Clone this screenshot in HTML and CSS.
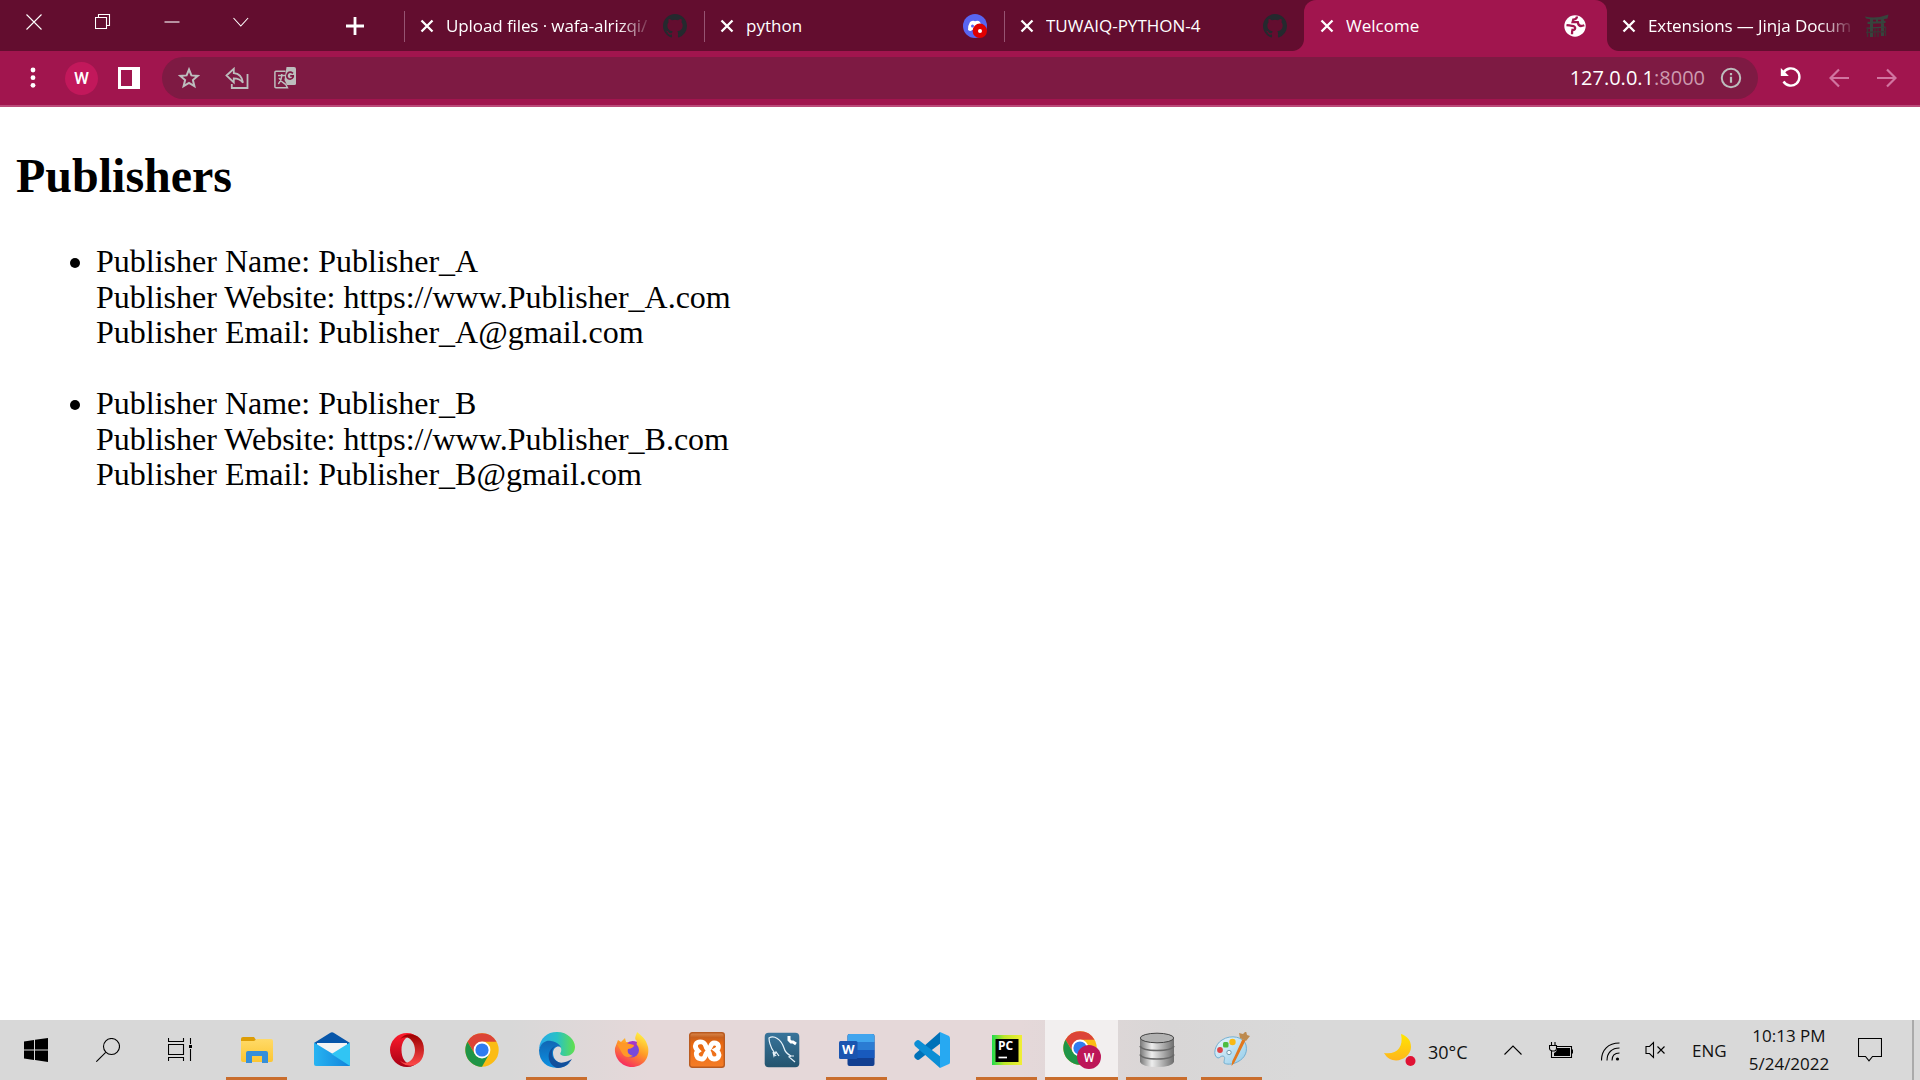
FILE: index.html
```html
<!DOCTYPE html>
<html lang="en">
<head>
<meta charset="utf-8">
<title>Welcome</title>
<link rel="stylesheet" href="styles.css">
</head>
<body>
<svg width="0" height="0" class="defs">
  <defs>
    <symbol id="close" viewBox="0 0 14 14"><path d="M1.5 1.5l11 11M12.500 1.500l-11 11" stroke="#fff" stroke-width="2.300" fill="none"/></symbol>
    <symbol id="github" viewBox="0 0 16 16"><path fill="#24292e" d="M8 0C3.580 0 0 3.580 0 8c0 3.540 2.290 6.530 5.470 7.590.4.070.55-.17.55-.38 0-.19-.01-.82-.01-1.490-2.010.37-2.530-.49-2.690-.94-.09-.23-.48-.94-.82-1.130-.28-.15-.68-.52-.01-.53.63-.01 1.080.58 1.230.82.72 1.210 1.870.87 2.330.66.070-.52.28-.87.51-1.070-1.780-.2-3.640-.89-3.640-3.950 0-.87.31-1.590.82-2.150-.08-.2-.36-1.020.08-2.120 0 0 .67-.21 2.200.82a7.600 7.600 0 0 1 4 0c1.530-1.040 2.200-.82 2.200-.82.44 1.100.16 1.920.08 2.120.51.56.82 1.270.82 2.150 0 3.070-1.870 3.750-3.650 3.950.29.25.54.73.54 1.480 0 1.070-.01 1.930-.01 2.200 0 .21.15.46.55.38A8 8 0 0 0 16 8c0-4.420-3.580-8-8-8z"/></symbol>
    <symbol id="chrome" viewBox="0 0 34 34">
      <circle cx="17" cy="17" r="16.700" fill="#fbbc14"/>
      <path d="M2.500 8.700A16.700 16.700 0 0 1 31.500 8.700H17L10 21z" fill="#dc4437"/>
      <path d="M2.500 8.700A16.700 16.700 0 0 0 17 33.700L24.200 21 9.800 21z" fill="#1f9547"/>
      <circle cx="17" cy="17" r="8.400" fill="#fff"/><circle cx="17" cy="17" r="6.600" fill="#2f7cf0"/>
    </symbol>
    <linearGradient id="operaA" x2="0" y2="1"><stop stop-color="#ff1b2d"/><stop offset="1" stop-color="#a70014"/></linearGradient>
    <linearGradient id="operaB" x2="0" y2="1"><stop stop-color="#9c0000"/><stop offset="1" stop-color="#ff4b4b"/></linearGradient>
    <linearGradient id="edgeA"><stop stop-color="#28a8ea"/><stop offset=".5" stop-color="#27c1c6"/><stop offset="1" stop-color="#62e04b"/></linearGradient>
    <linearGradient id="edgeB" x2="0" y2="1"><stop stop-color="#1266b4"/><stop offset="1" stop-color="#0b91e2"/></linearGradient>
    <linearGradient id="fox" x1=".7" x2=".2" y2="1"><stop stop-color="#fff044"/><stop offset=".45" stop-color="#ff9a26"/><stop offset="1" stop-color="#f51b68"/></linearGradient>
    <linearGradient id="mailA"><stop stop-color="#27b4f2"/><stop offset="1" stop-color="#1283da"/></linearGradient>
    <linearGradient id="folder" x2="0" y2="1"><stop stop-color="#ffda68"/><stop offset="1" stop-color="#fcc632"/></linearGradient>
    <linearGradient id="sql" x2="0" y2="1"><stop stop-color="#38749b"/><stop offset="1" stop-color="#24546e"/></linearGradient>
    <linearGradient id="pc"><stop stop-color="#1fdb4c"/><stop offset=".4" stop-color="#bce629"/><stop offset="1" stop-color="#f2ee35"/></linearGradient>
    <linearGradient id="disk"><stop stop-color="#777"/><stop offset=".35" stop-color="#eee"/><stop offset="1" stop-color="#6d6d6d"/></linearGradient>
    <linearGradient id="moon" x2="0" y2="1"><stop stop-color="#ffe600"/><stop offset="1" stop-color="#ffb51c"/></linearGradient>
    <linearGradient id="xampp" x2="0" y2="1"><stop stop-color="#d98a50"/><stop offset=".14" stop-color="#c8601e"/><stop offset=".3" stop-color="#e8670f"/><stop offset="1" stop-color="#f57d27"/></linearGradient>
    <linearGradient id="palette" x2="1" y2="1"><stop stop-color="#edf8fd"/><stop offset="1" stop-color="#91cbe9"/></linearGradient>
  </defs>
</svg>

<header class="tabstrip">
  <div class="window-controls">
    <svg width="16" height="16" viewBox="0 0 16 16"><path d="M.5 .5l15 15M15.500 .5l-15 15" class="thin-white"/></svg>
    <svg width="16" height="16" viewBox="0 0 16 16"><path d="M.5 3.500h11v11H.5zM3.500 3.500v-3h11v11h-3" class="thin-white"/></svg>
    <svg width="16" height="16" viewBox="0 0 16 16"><path d="M.5 8h15" class="thin-white"/></svg>
    <svg width="16" height="16" viewBox="0 0 16 16"><path d="M.5 4l7.300 8 7.300-8" class="thin-white"/></svg>
    <svg class="new-tab" width="18" height="18" viewBox="0 0 18 18"><path d="M9 0v18M0 9h18" stroke="#fff" stroke-width="2.800"/></svg>
  </div>
  <div class="tab">
    <svg class="close" width="14" height="14"><use href="#close"/></svg>
    <span class="title faded">Upload files · wafa-alrizqi/</span>
    <svg width="24" height="24"><use href="#github"/></svg>
  </div>
  <div class="tab">
    <svg class="close" width="14" height="14"><use href="#close"/></svg>
    <span class="title python">python</span>
    <svg width="24" height="24" viewBox="0 0 24 24"><circle cx="12" cy="12" r="12" fill="#5865f2"/><path d="M7 8q3-2 5-.8 3-1.200 5 .8 2 3 2 8-3 2-4 0H9q-1 2-4 0 0-5 2-8z" fill="#fff"/><circle cx="9.500" cy="12" r="1.500" fill="#5865f2"/><circle cx="16.800" cy="16.800" r="7.200" fill="#e00000"/><circle cx="17" cy="17" r="2" fill="#fff"/></svg>
  </div>
  <div class="tab">
    <svg class="close" width="14" height="14"><use href="#close"/></svg>
    <span class="title tuwaiq">TUWAIQ-PYTHON-4</span>
    <svg width="24" height="24"><use href="#github"/></svg>
  </div>
  <div class="tab active">
    <svg class="close" width="14" height="14"><use href="#close"/></svg>
    <span class="title welcome">Welcome</span>
    <svg width="24" height="24" viewBox="0 0 24 24"><circle cx="12" cy="12" r="10.700" fill="#fff"/><path d="M3.500 11.200q3 .4 5.500.6 3 .2 3.200 2.200-.1 2-2.700 1.800-.5 1.200-.5 4.500M14 2.500q-.3 3-3.700 3.200l-.7 2.500h5.200q.7 3.800 3.200 3.800 1.500 0 3.300-.7" stroke="#a1154e" stroke-width="2.300" fill="none"/></svg>
  </div>
  <div class="tab last">
    <svg class="close" width="14" height="14"><use href="#close"/></svg>
    <span class="title faded jinja">Extensions — Jinja Docum</span>
    <svg width="24" height="24" viewBox="0 0 24 24"><path d="M0 2.500q12 2.500 23.500-2l-1 4Q12 7 1 4.500zM2.500 7.800l18-1v2.300l-18 .8zM5 5h3v18H5zM16 5h3v17h-3zM11 5h2v4h-2zM1.500 13.500l19-1v1.300l-19 1z" fill="#37443d"/><path d="M2.500 14v9M10 14v9M13 14v9M20.500 13v9M1 18.500l20-1" stroke="#3c3335" stroke-width="1.300"/></svg>
  </div>
</header>

<nav class="toolbar">
  <svg class="menu" width="6" height="22" viewBox="0 0 6 22"><g fill="#fff"><circle cx="3" cy="3" r="2.400"/><circle cx="3" cy="10.700" r="2.400"/><circle cx="3" cy="18.300" r="2.400"/></g></svg>
  <span class="avatar">W</span>
  <svg class="panel" width="22" height="22" viewBox="0 0 22 22"><path d="M0 0h22v22H0zM3 3v16h11V3z" fill="#fff" fill-rule="evenodd"/></svg>
  <div class="omnibox">
    <svg width="22" height="22" viewBox="0 0 22 22"><path d="M11 2.500l2.400 5.900 6.300.5-4.800 4.100 1.500 6.200L11 15.900l-5.400 3.300 1.500-6.200L2.300 8.900l6.300-.5z" fill="none" stroke="#bdbdbd" stroke-width="2"/></svg>
    <svg width="24" height="22" viewBox="0 0 24 22"><path d="M1.500 8.500L8.800 1.800v4.400c5 .3 8.200 3.300 9.200 9.500-2.300-3.200-5.200-4.300-9.200-4.300v4zM6.800 17v4h15.700V7" fill="none" stroke="#bdbdbd" stroke-width="1.800"/></svg>
    <svg width="22" height="22" viewBox="0 0 22 22"><path d="M11.500 4.200H1.900q-1 0-1 1v14.500q0 1 1 1h11.500l-2-4M4 8.500h8M7.800 7v2q-.5 5-3.500 8M5 11q2 3.500 6 6" fill="none" stroke="#bdbdbd" stroke-width="1.500"/><path d="M12.500 0H20q2 0 2 2v14.500q0 1.500-1.500 1.500H13l-2.500-5z" fill="#bdbdbd"/><path d="M19 6.300q-3-2.300-5.300 0-2 3.500.8 5.500 3 1.300 4.700-2v-1h-3" fill="none" stroke="#7e1a43" stroke-width="1.700"/></svg>
    <span class="url">127.0.0.1<span class="port">:8000</span></span>
    <svg class="info" width="22" height="22" viewBox="0 0 22 22"><circle cx="11" cy="11" r="9.200" fill="none" stroke="#bdbdbd" stroke-width="2"/><path d="M11 9.800v6M11 6v2.200" stroke="#bdbdbd" stroke-width="2.200"/></svg>
  </div>
  <svg class="reload" width="22" height="22" viewBox="0 0 22 22"><path d="M3.500 5.500A8.600 8.600 0 1 1 3.500 14.500" fill="none" stroke="#fff" stroke-width="2.400"/><path d="M.8 1v8h8z" fill="#fff"/></svg>
  <svg class="nav-arrow" width="20" height="20" viewBox="0 0 20 20"><path d="M20 10H1.500M10 1.500L1.500 10l8.500 8.500" class="arrow"/></svg>
  <svg class="nav-arrow" width="20" height="20" viewBox="0 0 20 20"><path d="M0 10h18.500M10 1.500l8.500 8.500-8.500 8.500" class="arrow"/></svg>
</nav>

<main class="page">
  <h2>Publishers</h2>
  <ul>
    <li>Publisher Name: Publisher_A<br>Publisher Website: https://www.Publisher_A.com<br>Publisher Email: Publisher_A@gmail.com</li>
    <li>Publisher Name: Publisher_B<br>Publisher Website: https://www.Publisher_B.com<br>Publisher Email: Publisher_B@gmail.com</li>
  </ul>
</main>

<footer class="taskbar">
  <div class="system">
    <svg width="24" height="24" viewBox="0 0 24 24"><path d="M0 3.400l10-1.400v9.400H0zM11 1.800L24 0v11.400H11zM0 12.400h10v9.500L0 20.500zM11 12.400h13V24l-13-1.900z"/></svg>
    <svg width="24" height="24" viewBox="0 0 24 24"><circle cx="15.500" cy="8.500" r="8" class="line"/><path d="M9.700 14.300L.3 23.700" class="line"/></svg>
    <svg width="24" height="24" viewBox="0 0 24 24"><path d="M.5 0v3.500h15V0M.5 6.500h15v10H.5zM.5 23v-3.500h15V23M22.500 0v6M22.500 11v12" class="line"/><path d="M21 7h3v3h-3z"/></svg>
  </div>
  <div class="apps">
    <div class="app open"><svg width="36" height="36" viewBox="0 0 36 36"><path d="M2 7q0-2 2-2h11l2 3v4H2z" fill="#dd9d06"/><path d="M2 9h13l3-2h14q2 0 2 2v19q0 2-2 2H4q-2 0-2-2z" fill="url(#folder)"/><path d="M7 21q0-2 2-2h18q2 0 2 2v10h-6v-7H13v7H7z" fill="#368fd9"/></svg></div>
    <div class="app"><svg width="36" height="36" viewBox="0 0 36 36"><path d="M0 11L16 1q2-1.300 4 0l16 10v10H0z" fill="#0756aa"/><path d="M3 11h30v14H3z" fill="#f4f4f4"/><path d="M0 10.500l36 22v1.500H2q-2 0-2-2z" fill="url(#mailA)"/><path d="M36 10.500L17.500 22 36 34z" fill="#31c5f4"/></svg></div>
    <div class="app"><svg width="36" height="36" viewBox="0 0 36 36"><path d="M18 1a17 17 0 1 0 0 34c5 0 9-2 11.500-5.500-10 7-17-1-17-11.500S20 0 29.500 6.500C27 3 23 1 18 1z" fill="url(#operaA)"/><path d="M11 7.500C18 1 26 9 26 18s-8 17-15 10.500C16 37 35 36 35 18S16-1 11 7.500z" fill="url(#operaB)"/></svg></div>
    <div class="app"><svg width="34" height="34"><use href="#chrome"/></svg></div>
    <div class="app open"><svg width="36" height="36" viewBox="0 0 36 36"><path d="M0 17C1 6 8 0 18 0c11 0 18 8 18 15 0 6-5 9-9 9-5 0-7-2-5-4 3-9-14-14-22-3z" fill="url(#edgeA)"/><path d="M0 18C2 10 8 8 12 9c7 1 10 5 10 7-2-3-8-1-8 5 0 8 8 13 17 10C21 40 0 37 0 18z" fill="url(#edgeB)"/><path d="M16 14c-5 4-4 13 3 16 5 2 10-1 14-3-3 5-8 9-14 9-9-1-14-16-3-22z" fill="#114f9c"/></svg></div>
    <div class="app"><svg width="36" height="36" viewBox="0 0 36 36"><path d="M4 8l3 2 4-4 1 4c4 0 6 2 6 4l5-5c-4-2 0-7 0-9 5 4 9 7 11 15 2 11-5 20-16 20C7 35 0 25 1 16z" fill="url(#fox)"/><circle cx="17.500" cy="18" r="7.500" fill="#7749dc"/><path d="M12 12q5-5 11-2l-1 5q-4 0-6 2z" fill="#a437c7"/><path d="M3 12l9-1 8 2q0 3-6 4-2 5 5 7-8 3-11-3z" fill="#ff9828"/></svg></div>
    <div class="app"><svg width="36" height="36" viewBox="0 0 36 36"><rect x=".7" y=".7" width="34.600" height="34.600" rx="2.500" fill="url(#xampp)" stroke="#b95b20" stroke-width="1.400"/><path d="M9 19c-5-5-2-10 4-9 5 1 3 7 6 7s2-6 6-6c5 0 6 5 2 7 5 4 3 9-2 9-6 0-3-7-6-7s-2 7-6 7c-6 0-7-6-4-8z" fill="none" stroke="#fff" stroke-width="4.800"/></svg></div>
    <div class="app"><svg width="36" height="36" viewBox="0 0 36 36"><rect x=".7" y=".7" width="34.600" height="34.600" rx="4" fill="url(#sql)"/><path d="M12 24l-2-4c-4-5-5-12-5-14 5-3 12 1 15 10 1 4 3 6 7 8l-2 1 6 5M9 20l1 4 2-4 3 4M27 24l3 0" fill="none" stroke="#e8f3fa" stroke-width="1.200"/><path d="M25 4v4l2 2h2l3 2" fill="none" stroke="#fff" stroke-width="3"/></svg></div>
    <div class="app open"><svg width="36" height="36" viewBox="0 0 36 36"><rect x="8.500" y="2" width="27" height="32" rx="2" fill="#123f91"/><path d="M8.500 18h27v8h-27z" fill="#185abd"/><path d="M8.500 10h27v8h-27z" fill="#2b7cd3"/><path d="M8.500 10V4q0-2 2-2h23q2 0 2 2v6z" fill="#41a5ee"/><rect y="9" width="18.500" height="18" rx="1.500" fill="#1a55b0"/><text x="9.200" y="22" text-anchor="middle" class="word">W</text></svg></div>
    <div class="app"><svg width="36" height="36" viewBox="0 0 36 36"><path d="M26 0L1 22q-2 3 1 5 2 2 4 0L27 11z" fill="#0071b8"/><path d="M26 36L1 14q-2-3 1-5 2-2 4 0l21 16z" fill="#0c8ed5"/><path d="M26 0l9 4q1 1 1 3v23q0 2-1 2l-9 4z" fill="#27a9f2"/></svg></div>
    <div class="app open"><svg width="30" height="30" viewBox="0 0 30 30"><path d="M0 0h30v30H0z" fill="url(#pc)"/><path d="M3.500 4h23v23h-23z"/><text x="6" y="15" class="pc">PC</text><path d="M6.500 22.500h8.500" stroke="#fff" stroke-width="1.700"/></svg></div>
    <div class="app open current"><svg width="38" height="38" viewBox="0 0 38 38"><use href="#chrome" width="34" height="34"/><circle cx="26" cy="26" r="12" fill="#bd1758"/><text x="26" y="30.500" text-anchor="middle" class="badge">W</text></svg></div>
    <div class="app open"><svg width="36" height="36" viewBox="0 0 36 36"><path d="M1 6v24q2 5 17 5t17-5V6z" fill="url(#disk)"/><path d="M1 14q2 4.500 17 4.500T35 14M1 22.500q2 4.500 17 4.500t17-4.500" fill="none" stroke="#696969" stroke-width="1.700"/><ellipse cx="18" cy="6" rx="16.700" ry="4.800" fill="#b2b2b2" stroke="#444" stroke-width="1"/></svg></div>
    <div class="app open"><svg width="36" height="36" viewBox="0 0 36 36"><path d="M4 26C-2 24 1 12 8 8c9-6 22-3 24 5 2 9-3 15-11 18-5 2-10 1-11 0 0-4 2-6-1-7-3 0-3 2-5 2z" fill="url(#palette)" stroke="#72afd1"/><circle cx="6" cy="18" r="2.900" fill="#df4445"/><rect x="9" y="10" width="5.500" height="5.500" rx="1.500" fill="#4cbd42"/><circle cx="18.500" cy="10" r="3.200" fill="#f8b914"/><circle cx="15" cy="20.500" r="2.200" fill="#eff7fb" stroke="#739caf"/><path d="M17.500 34q0-5 3-9.500l8-17.500 3 1.500-9 18q-2 5-5 7.500z" fill="#e2781e"/><path d="M26 6l-1-5 4 1 3-3 1 4 3 1-4 5z" fill="#bd8b50"/></svg></div>
  </div>
  <div class="tray">
    <svg class="weather" width="32" height="33" viewBox="0 0 32 33"><path d="M17 0c6 2 10 6 10 13 0 12-19 20-27 6 12 2 20-5 17-19z" fill="url(#moon)"/><circle cx="26.500" cy="27" r="5" fill="#e01234"/></svg>
    <span class="temperature">30°C</span>
    <svg class="chevron" width="18" height="10" viewBox="0 0 18 10"><path d="M.5 9.500L9 1l8.500 8.500" class="line"/></svg>
    <svg class="battery" width="24" height="17" viewBox="0 0 24 17"><path d="M8 4.500h14.500v11h-20v-7M23.500 7.500v4" class="line"/><path d="M8 6h13v8H5v-3q3-1 3-5z"/><path d="M2.500 0v3M6 0v3M.5 3.500h7v3q0 2-2 2.500H3Q.5 8.500.5 6.500z" class="line"/></svg>
    <svg class="wifi" width="19" height="19" viewBox="0 0 19 19"><path d="M.5 18.500C.5 8 7 1 18.500 1M6 18.500C6 10.500 11 6 18.500 6M11 18.500Q11 11 18.500 11" class="line"/><circle cx="16.500" cy="17" r="1.600"/></svg>
    <svg class="sound" width="22" height="18" viewBox="0 0 22 18"><path d="M1 5.500h3.500l4-4v15l-4-4H1zM12.500 5.500l7 7M19.500 5.500l-7 7" class="line"/></svg>
    <span class="language">ENG</span>
    <div class="clock"><span class="time">10:13 PM</span><span class="date">5/24/2022</span></div>
    <svg class="action-center" width="24" height="24" viewBox="0 0 24 24"><path d="M.5 .5h23v18h-9l-3.500 4.300-3.500-4.300h-7z" class="line"/></svg>
    <span class="peek"></span>
  </div>
</footer>
</body>
</html>
```
FILE: styles.css
```css
* { box-sizing: border-box; }
body { margin: 0; height: 1080px; overflow: hidden; display: flex; flex-direction: column; background: #fff; font-family: "Open Sans", "Noto Sans", sans-serif; }
svg { display: block; flex: none; }
.defs { position: absolute; }
.thin-white { fill: none; stroke: #fff; stroke-width: 1.1; }
.line { fill: none; stroke: #000; stroke-width: 1.1; }
.arrow { fill: none; stroke: #d175a0; stroke-width: 2.2; }

.tabstrip { display: flex; height: 51px; flex: none; background: #630d2f; }
.window-controls { display: flex; width: 404px; flex: none; gap: 53px; padding: 14px 0 0 26px; }
.new-tab { margin: 3px 0 0 44px; }
.tab { position: relative; display: flex; align-items: center; width: 300px; flex: none; padding: 1px 17px 0 16px; color: #fff; font-size: 17px; }
.tab::before { content: ""; position: absolute; left: 0; top: 11px; width: 1px; height: 31px; background: #965472; }
.tab .close { margin-right: 12px; }
.title { width: 205px; margin-right: 12px; overflow: hidden; white-space: nowrap; line-height: 26px; }
.faded { letter-spacing: -.1px; -webkit-mask-image: linear-gradient(to right, #000 84%, transparent 101%); mask-image: linear-gradient(to right, #000 84%, transparent 101%); }
.active { width: 303px; background: #a1154e; border-radius: 12px 12px 0 0; padding-right: 18px; }
.active::before, .active::after { content: ""; position: absolute; left: -12px; top: 39px; width: 12px; height: 12px; background: radial-gradient(circle at 0 0, #630d2f 11.5px, #a1154e 12.5px); }
.active::after { left: auto; right: -12px; background: radial-gradient(circle at 100% 0, #630d2f 11.5px, #a1154e 12.5px); }
.last { padding-left: 15px; }
.last::before { display: none; }

.toolbar { display: flex; align-items: center; height: 56px; flex: none; padding-left: 30px; background: #a1154e; border-bottom: 2px solid #bb4b79; }
.avatar { width: 33px; height: 33px; margin: 0 20px 0 29px; border-radius: 50%; background: #c2185b; color: #fff; font: 500 17px/33px Roboto, sans-serif; text-align: center; }
.omnibox { display: flex; align-items: center; width: 1596px; height: 42px; margin-left: 22px; padding: 0 16px; border-radius: 21px; background: #7e1a43; gap: 25px; }
.url { margin-left: auto; color: #fff; font-size: 20px; line-height: 30px; }
.port { color: #cd9aaf; }
.info { margin-left: -10px; }
.reload { margin-left: 22px; }
.nav-arrow { margin-left: 27px; }
.nav-arrow + .nav-arrow { margin-left: 28px; }

.page { flex: 1; padding: 0 16px; color: #000; font: 32px/35.5px "Liberation Serif", "Times New Roman", serif; }
.page h2 { margin: 41px 0; font-size: 48px; line-height: 55px; }
.page ul { margin: 0; padding-left: 80px; }
.page li { margin-bottom: 35.500px; }

.taskbar { display: flex; height: 60px; flex: none; background: linear-gradient(90deg, #d8d8d8 0 510px, #e5d8d9 650px 1020px, #d8d6d6 1170px, #d9d9d9 1300px); }
.system { display: flex; align-items: center; gap: 48px; width: 220px; padding-left: 24px; }
.apps { display: flex; gap: 2px; }
.app { display: flex; align-items: center; justify-content: center; width: 73px; }
.open { background: linear-gradient(#c96d2d, #c96d2d) center bottom / 61px 3px no-repeat; }
.current { background: linear-gradient(#c96d2d, #c96d2d) center bottom / 73px 3px no-repeat, #f2efef; }
.word { font: bold 13px "Open Sans", sans-serif; fill: #fff; }
.pc { font: bold 12px "Open Sans", sans-serif; fill: #fff; }
.badge { font: 500 12px Roboto, sans-serif; fill: #fff; }

.tray { display: flex; align-items: center; flex: 1; font-size: 18px; color: #111; }
.weather { margin-left: 116px; }
.temperature { width: 45px; margin: 3px 31px 0 12px; white-space: nowrap; }
.battery { margin: 0 28px 0 27px; }
.wifi { margin-top: 2px; }
.sound { margin-left: 25px; }
.language { width: 35px; margin: 1px 20px 0 25px; font-size: 17px; }
.clock { display: flex; flex-direction: column; align-items: center; width: 84px; line-height: 28px; white-space: nowrap; font-size: 17px; }
.action-center { margin-left: 27px; }
.peek { width: 2px; height: 60px; margin-left: 30px; background: #aaa; }
```
